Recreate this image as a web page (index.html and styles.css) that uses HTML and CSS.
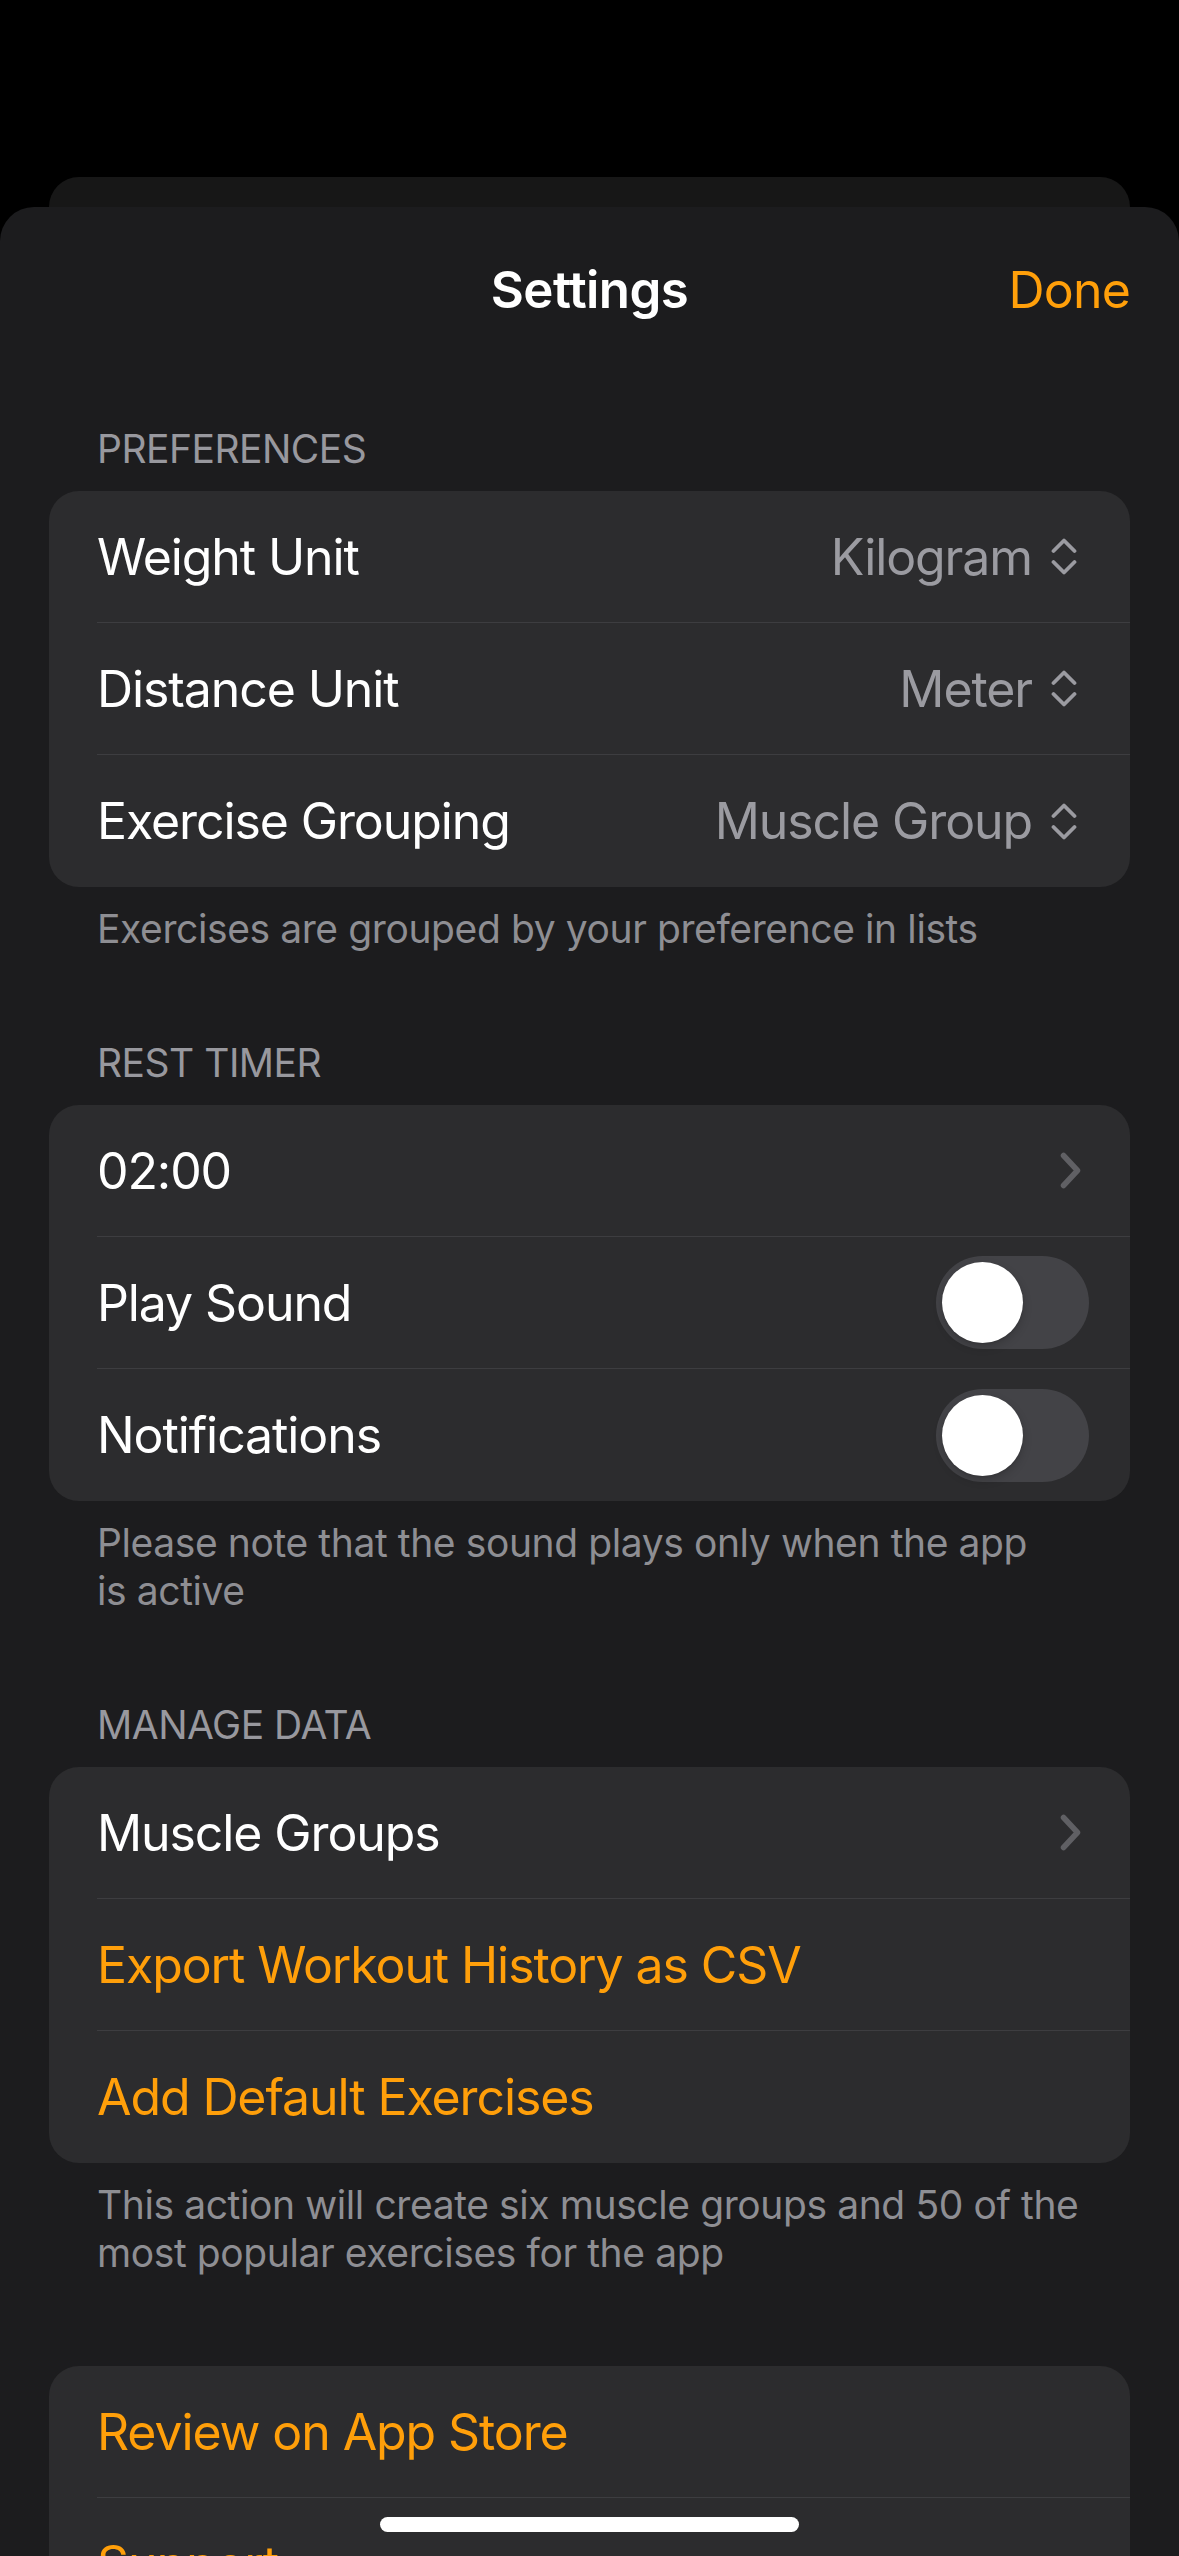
FILE: index.html
```html
<!DOCTYPE html>
<html lang="en">
<head>
<meta charset="utf-8">
<title>Settings</title>
<link rel="stylesheet" href="styles.css">
</head>
<body>
<div class="screen">
  <div class="back-card"></div>
  <div class="sheet">
    <header class="nav">
      <span></span>
      <h1 class="nav-title">Settings</h1>
      <span class="nav-done">Done</span>
    </header>

    <section class="section first">
      <div class="section-header">PREFERENCES</div>
      <div class="card">
        <div class="row picker">
          <span class="label">Weight Unit</span>
          <span class="value">Kilogram</span>
          <svg class="updown" viewBox="0 0 26 37" width="26" height="37"><path d="M2.5 13 L13 2.5 L23.5 13 M2.5 24 L13 34.5 L23.5 24"/></svg>
        </div>
        <div class="row picker">
          <span class="label">Distance Unit</span>
          <span class="value">Meter</span>
          <svg class="updown" viewBox="0 0 26 37" width="26" height="37"><path d="M2.5 13 L13 2.5 L23.5 13 M2.5 24 L13 34.5 L23.5 24"/></svg>
        </div>
        <div class="row picker">
          <span class="label">Exercise Grouping</span>
          <span class="value">Muscle Group</span>
          <svg class="updown" viewBox="0 0 26 37" width="26" height="37"><path d="M2.5 13 L13 2.5 L23.5 13 M2.5 24 L13 34.5 L23.5 24"/></svg>
        </div>
      </div>
      <p class="section-footer">Exercises are grouped by your preference in lists</p>
    </section>

    <section class="section">
      <div class="section-header">REST TIMER</div>
      <div class="card">
        <div class="row link">
          <span class="label">02:00</span>
          <svg class="chev" viewBox="0 0 21 37" width="21" height="37"><path d="M3.5 3.5 L17.5 18.5 L3.5 33.5"/></svg>
        </div>
        <div class="row toggle-row">
          <span class="label">Play Sound</span>
          <span class="switch"><span class="knob"></span></span>
        </div>
        <div class="row toggle-row">
          <span class="label">Notifications</span>
          <span class="switch"><span class="knob"></span></span>
        </div>
      </div>
      <p class="section-footer">Please note that the sound plays only when the app<br>is active</p>
    </section>

    <section class="section">
      <div class="section-header">MANAGE DATA</div>
      <div class="card">
        <div class="row link">
          <span class="label">Muscle Groups</span>
          <svg class="chev" viewBox="0 0 21 37" width="21" height="37"><path d="M3.5 3.5 L17.5 18.5 L3.5 33.5"/></svg>
        </div>
        <div class="row">
          <span class="label action">Export Workout History as CSV</span>
        </div>
        <div class="row">
          <span class="label action">Add Default Exercises</span>
        </div>
      </div>
      <p class="section-footer">This action will create six muscle groups and 50 of the<br>most popular exercises for the app</p>
    </section>

    <section class="section last">
      <div class="card">
        <div class="row">
          <span class="label action">Review on App Store</span>
        </div>
        <div class="row">
          <span class="label action">Support</span>
        </div>
      </div>
    </section>
  </div>
  <div class="home-indicator"></div>
</div>
</body>
</html>
```

FILE: styles.css
```css
* { box-sizing: border-box; }

html, body {
  margin: 0;
  padding: 0;
  background: #000;
}

body {
  font-family: Inter, "Noto Sans", "Liberation Sans", sans-serif;
  color: #fff;
  -webkit-font-smoothing: antialiased;
}

.screen {
  position: relative;
  width: 1179px;
  height: 2556px;
  overflow: hidden;
  padding-top: 177px;
}

.back-card {
  margin: 0 49px;
  height: 30px;
  background: #171717;
  border-radius: 30px 30px 0 0;
}

.sheet {
  background: #1c1c1e;
  border-radius: 34px 34px 0 0;
  min-height: 2400px;
}

.nav {
  display: grid;
  grid-template-columns: 1fr auto 1fr;
  align-items: baseline;
  padding: 52px 49px 0;
}

.nav-title {
  margin: 0;
  font-size: 51px;
  line-height: 62px;
  font-weight: 600;
  letter-spacing: -0.6px;
  color: #fff;
}

.nav-done {
  justify-self: end;
  font-size: 50px;
  line-height: 62px;
  color: #ff9f0a;
  letter-spacing: -0.8px;
}

.section {
  margin: 0 49px;
}

.section.first { margin-top: 104px; }
.section + .section { margin-top: 86px; }
.section.last { margin-top: 89px; }

.section-header {
  padding: 0 48px 18px;
  font-size: 39px;
  line-height: 48px;
  color: #98989e;
  letter-spacing: -0.5px;
}

.card {
  background: #2c2c2e;
  border-radius: 30px;
  overflow: hidden;
}

.row {
  display: flex;
  align-items: center;
  height: 132px;
  margin-left: 48px;
  padding-right: 49px;
  border-bottom: 1px solid #3d3d40;
}

.row:last-child { border-bottom: none; }

.label {
  flex: 1;
  font-size: 50px;
  line-height: 62px;
  letter-spacing: -1.1px;
  color: #fff;
  white-space: nowrap;
}

.label.action { color: #ff9f0a; }

.value {
  font-size: 50px;
  line-height: 62px;
  letter-spacing: -1.1px;
  color: #9b9ba1;
  white-space: nowrap;
}

.row.picker { padding-right: 53px; }

.updown {
  margin-left: 19px;
  fill: none;
  stroke: #9b9ba1;
  stroke-width: 3.8;
  stroke-linecap: round;
  stroke-linejoin: round;
}

.chev {
  fill: none;
  stroke: #606064;
  stroke-width: 5.5;
  stroke-linecap: round;
  stroke-linejoin: round;
}

.row.toggle-row { padding-right: 41px; }

.switch {
  display: flex;
  align-items: center;
  width: 153px;
  height: 93px;
  padding: 6px;
  border-radius: 47px;
  background: #434347;
}

.knob {
  width: 81px;
  height: 81px;
  border-radius: 50%;
  background: #fff;
  box-shadow: 0 4px 10px rgba(0, 0, 0, 0.18), 0 1px 2px rgba(0, 0, 0, 0.12);
}

.section-footer {
  margin: 0;
  padding: 18px 48px 0;
  font-size: 39px;
  line-height: 48px;
  color: #8e8e93;
  letter-spacing: -0.4px;
  white-space: nowrap;
}

.home-indicator {
  position: absolute;
  left: 380px;
  bottom: 24px;
  width: 419px;
  height: 15px;
  border-radius: 8px;
  background: #fff;
}
```
